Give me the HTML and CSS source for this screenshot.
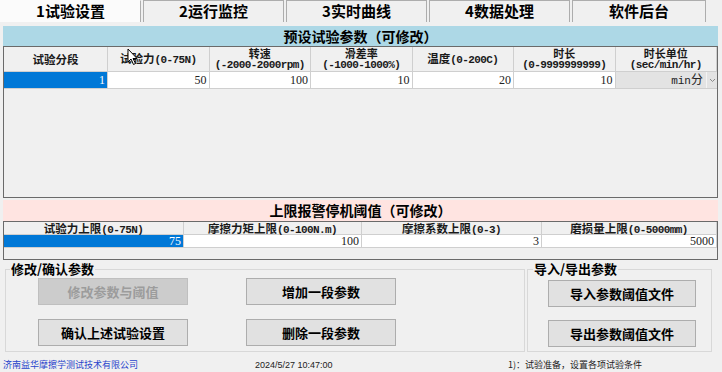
FILE: index.html
```html
<!DOCTYPE html>
<html lang="zh-CN">
<head>
  <meta charset="UTF-8" />
  <title>试验设置</title>
  <link rel="stylesheet" href="styles.css">
</head>
<body>

  <nav class="tabs">
    <div class="tab active">1试验设置</div>
    <div class="tab">2运行监控</div>
    <div class="tab">3实时曲线</div>
    <div class="tab">4数据处理</div>
    <div class="tab last">软件后台</div>
  </nav>

  <main class="panel">
    <div class="bar bar-blue">预设试验参数（可修改）</div>
    <div class="table table-main">
      <div class="row row-head">
        <div class="hd">试验分段</div>
        <div class="hd"><span>试验力<span class="en">(0-75N)</span></span></div>
        <div class="hd two"><span class="l1">转速</span><span class="en">(-2000-2000rpm)</span></div>
        <div class="hd two"><span class="l1">滑差率</span><span class="en">(-1000-1000%)</span></div>
        <div class="hd"><span>温度<span class="en">(0-200C)</span></span></div>
        <div class="hd two"><span class="l1">时长</span><span class="en">(0-9999999999)</span></div>
        <div class="hd two"><span class="l1">时长单位</span><span class="en">(sec/min/hr)</span></div>
      </div>
      <div class="row row-data">
        <div class="cell sel">1</div>
        <div class="cell">50</div>
        <div class="cell">100</div>
        <div class="cell">10</div>
        <div class="cell">20</div>
        <div class="cell">10</div>
        <div class="cell combo">
          <span><span class="mono">min</span>分</span>
          <span class="arrow">
            <svg width="7" height="5" viewBox="0 0 7 5"><path d="M1 1 L3.5 3.5 L6 1" fill="none" stroke="#8a8a8a" stroke-width="1"/></svg>
          </span>
        </div>
      </div>
    </div>

    <div class="bar bar-pink">上限报警停机阈值（可修改）</div>
    <div class="table table-limit">
      <div class="row row-head">
        <div class="hd">试验力上限<span class="en">(0-75N)</span></div>
        <div class="hd">摩擦力矩上限<span class="en">(0-100N.m)</span></div>
        <div class="hd">摩擦系数上限<span class="en">(0-3)</span></div>
        <div class="hd">磨损量上限<span class="en">(0-5000mm)</span></div>
      </div>
      <div class="row row-data">
        <div class="cell sel">75</div>
        <div class="cell">100</div>
        <div class="cell">3</div>
        <div class="cell">5000</div>
      </div>
    </div>

    <div class="groups">
      <fieldset class="group group-edit">
        <legend>修改/确认参数</legend>
        <div class="btn-grid">
          <button class="btn" disabled>修改参数与阈值</button>
          <button class="btn">增加一段参数</button>
          <button class="btn">确认上述试验设置</button>
          <button class="btn">删除一段参数</button>
        </div>
      </fieldset>
      <fieldset class="group group-file">
        <legend>导入/导出参数</legend>
        <div class="btn-col">
          <button class="btn">导入参数阈值文件</button>
          <button class="btn">导出参数阈值文件</button>
        </div>
      </fieldset>
    </div>
  </main>

  <footer class="status">
    <span class="company">济南益华摩擦学测试技术有限公司</span>
    <span class="clock">2024/5/27 10:47:00</span>
    <span class="hint">1)：试验准备，设置各项试验条件</span>
  </footer>

  <svg class="cursor" width="12" height="18" viewBox="0 0 12 18">
    <path d="M1 1 L1 14 L4 11 L6.5 16.5 L8.5 15.5 L6 10.5 L10 10.5 Z" fill="#fff" stroke="#000" stroke-width="1"/>
  </svg>

</body>
</html>
```

FILE: styles.css
```css
* {
  box-sizing: border-box;
}
html, body {
  margin: 0;
  padding: 0;
}
body {
  width: 722px;
  height: 372px;
  overflow: hidden;
  background: #f0f0f0;
  font-family: "Noto Sans CJK SC", sans-serif;
  color: #000;
  display: flex;
  flex-direction: column;
  position: relative;
}

/* Tabs */
.tabs {
  display: flex;
  gap: 2px;
  height: 22px;
}
.tab {
  width: 141px;
  height: 22px;
  border: 1px solid #adadad;
  border-bottom: none;
  background: #f0f0f0;
  font-size: 15px;
  font-weight: 700;
  line-height: 20px;
  text-align: center;
}
.tab.active {
  background: #fbfbfb;
  border-left-color: #fbfbfb;
  border-top-color: #fbfbfb;
}
.tab.last {
  width: 134px;
}

/* Panel */
.panel {
  padding: 4px 4px 0 3px;
}
.bar {
  height: 20px;
  line-height: 20px;
  text-align: center;
  font-size: 14px;
  font-weight: 700;
}
.bar-blue {
  background: #add8e6;
}
.bar-pink {
  background: #ffe4e1;
  height: 21px;
  line-height: 21px;
  margin-top: 2px;
}

.table {
  border: 1px solid #6a6a6a;
  background: #f0f0f0;
  font-family: "Liberation Serif", "Noto Sans CJK SC", serif;
  font-size: 12px;
}
.table-main {
  height: 152px;
}
.table-limit {
  height: 39px;
}
.row {
  display: grid;
}
.table-main .row {
  grid-template-columns: 104px repeat(6, 1fr);
}
.table-limit .row {
  grid-template-columns: 180px 178px 180px 1fr;
}
.hd {
  border-right: 1px solid #cfcfcf;
  border-bottom: 1px solid #cfcfcf;
  text-align: center;
  font-family: "Noto Sans CJK SC", sans-serif;
  font-size: 11.5px;
  font-weight: 700;
  color: #1a1a1a;
  white-space: nowrap;
}
.hd .en {
  font-family: "Liberation Mono", monospace;
  font-size: 11px;
  letter-spacing: -0.6px;
}
.table-main .hd {
  height: 25px;
  line-height: 12px;
  display: flex;
  align-items: center;
  justify-content: center;
}
.table-main .hd.two {
  flex-direction: column;
  justify-content: flex-start;
  padding-top: 1px;
}
.hd .l1 {
  display: block;
  height: 11px;
  line-height: 11px;
  font-size: 11px;
}
.hd.two .en {
  display: block;
  height: 12px;
  line-height: 12px;
}
.table-limit .hd {
  height: 13px;
  line-height: 12px;
}
.cell {
  background: #fff;
  border-right: 1px solid #cfcfcf;
  border-bottom: 1px solid #cfcfcf;
  text-align: right;
  padding-right: 2px;
  color: #222;
}
.table-main .cell {
  height: 17px;
  line-height: 16px;
}
.table-limit .cell {
  height: 13px;
  line-height: 12px;
}
.cell.sel {
  background: #0078d7;
  color: #fff;
}
.cell.combo {
  background: #e3e3e3;
  display: flex;
  justify-content: flex-end;
  padding-right: 0;
  border-right: none;
}
.mono {
  font-family: "Liberation Mono", monospace;
  font-size: 11px;
}
.arrow {
  width: 11px;
  margin-left: 3px;
  display: flex;
  align-items: center;
  justify-content: center;
  border-left: 1px solid #f4f4f4;
}

/* Button groups */
.groups {
  display: flex;
  margin: 2px 0 0 2px;
  gap: 2px;
}
.group {
  margin: 0;
  padding: 0;
  border: 1px solid #d8d8d8;
  height: 90px;
}
.group legend {
  padding: 0 1px;
  margin-left: 4px;
  font-size: 13px;
  font-weight: 700;
  line-height: 14px;
}
.group-edit {
  width: 520px;
}
.group-file {
  width: 185px;
}
.group-file legend {
  margin-left: 5px;
}
.btn-grid {
  display: grid;
  grid-template-columns: 150px 150px;
  column-gap: 58px;
  row-gap: 14px;
  padding: 2px 0 0 32px;
}
.btn-col {
  display: flex;
  flex-direction: column;
  gap: 13px;
  padding: 4px 0 0 20px;
}
.btn {
  width: 150px;
  height: 27px;
  background: #e1e1e1;
  border: 1px solid #adadad;
  font-family: "Noto Sans CJK SC", sans-serif;
  font-size: 13px;
  font-weight: 700;
  color: #000;
  padding: 0;
}
.btn-col .btn {
  width: 148px;
}
.btn:disabled {
  background: #cccccc;
  border-color: #bfbfbf;
  color: #9c9c9c;
}

/* Status bar */
.status {
  margin-top: auto;
  height: 13px;
  display: grid;
  grid-template-columns: 252px 253px 1fr;
  padding-left: 3px;
  font-size: 9px;
  line-height: 12px;
  color: #222;
}
.company {
  color: #2844cc;
}
.clock {
  font-family: "Liberation Sans", sans-serif;
  font-size: 9px;
}

.cursor {
  position: absolute;
  left: 127px;
  top: 48px;
}
```
